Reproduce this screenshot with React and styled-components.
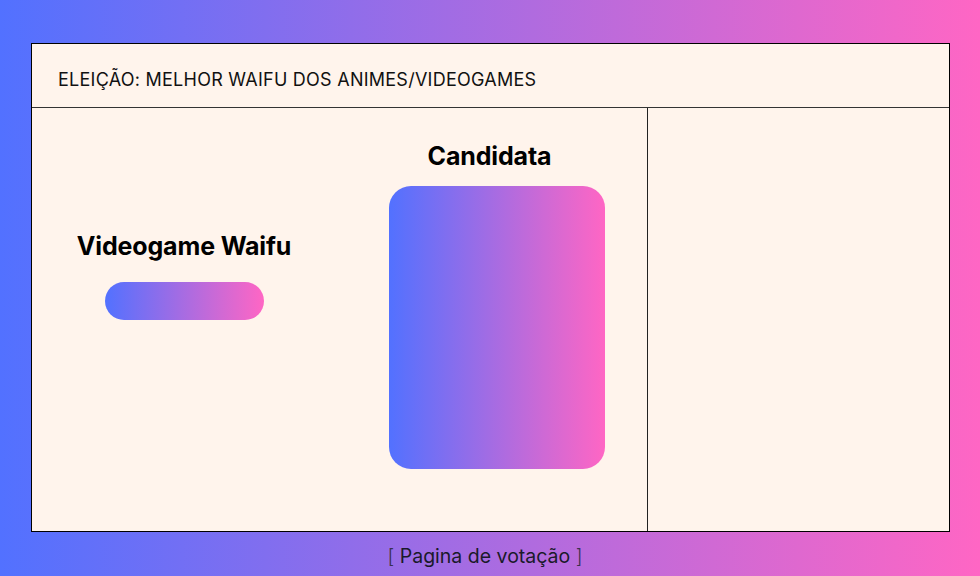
import React from "react";
import styled, { createGlobalStyle } from "styled-components";

const GlobalStyle = createGlobalStyle`
  html, body {
    margin: 0;
    padding: 0;
  }
  body {
    font-family: Inter, "Liberation Sans", sans-serif;
    color: #111;
  }
`;

const Page = styled.div`
  width: 980px;
  height: 576px;
  box-sizing: border-box;
  padding: 43px 0 0 31px;
  display: flex;
  flex-direction: column;
  background: linear-gradient(90deg, #5271ff 0%, #ff66c4 100%);
  overflow: hidden;
`;

const Panel = styled.div`
  width: 919px;
  height: 490px;
  box-sizing: border-box;
  border: 1px solid #000;
  background: #fff4ec;
  display: flex;
  flex-direction: column;
`;

const Header = styled.div`
  height: 64px;
  box-sizing: border-box;
  border-bottom: 1px solid #333;
  display: flex;
  align-items: center;
  padding: 7px 0 0 26px;
`;

const Title = styled.h1`
  margin: 0;
  font-size: 18px;
  font-weight: 400;
  letter-spacing: 0.25px;
  color: #111;
`;

const Body = styled.div`
  flex: 1;
  display: flex;
`;

const Main = styled.div`
  width: 615px;
  border-right: 1px solid #222;
  display: flex;
  align-items: flex-start;
`;

const Side = styled.div`
  flex: 1;
`;

const Group = styled.div`
  display: flex;
  flex-direction: column;
  align-items: center;
  width: ${(p) => p.$width}px;
  margin-left: ${(p) => p.$left}px;
  padding-top: ${(p) => p.$top}px;
`;

const Label = styled.h2`
  margin: 0 ${(p) => p.$shift || 0}px 0 0;
  font-size: 25px;
  line-height: 26px;
  font-weight: 700;
  letter-spacing: -0.15px;
  white-space: nowrap;
  color: #000;
`;

const Gradient = styled.div`
  background: linear-gradient(90deg, #5271ff 0%, #ff66c4 100%);
  width: ${(p) => p.$w}px;
  height: ${(p) => p.$h}px;
  border-radius: ${(p) => p.$r}px;
  margin-top: ${(p) => p.$gap}px;
`;

const Footer = styled.div`
  height: 44px;
  box-sizing: border-box;
  display: flex;
  align-items: center;
  justify-content: center;
  padding: 3px 41px 0 0;
  font-size: 19.5px;
  color: #1a1a2a;
`;

const Bracket = styled.span`
  color: #3a3050;
  font-weight: 300;
`;

export default function App() {
  return (
    <>
      <GlobalStyle />
      <Page>
        <Panel>
          <Header>
            <Title>ELEIÇÃO: MELHOR WAIFU DOS ANIMES/VIDEOGAMES</Title>
          </Header>
          <Body>
            <Main>
              <Group $width={212} $left={46} $top={125}>
                <Label>Videogame Waifu</Label>
                <Gradient $w={159} $h={38} $r={19} $gap={23} />
              </Group>
              <Group $width={216} $left={99} $top={35}>
                <Label $shift={15}>Candidata</Label>
                <Gradient $w={216} $h={283} $r={22} $gap={17} />
              </Group>
            </Main>
            <Side />
          </Body>
        </Panel>
        <Footer>
          <Bracket>[</Bracket>&nbsp;Pagina de votação&nbsp;<Bracket>]</Bracket>
        </Footer>
      </Page>
    </>
  );
}
